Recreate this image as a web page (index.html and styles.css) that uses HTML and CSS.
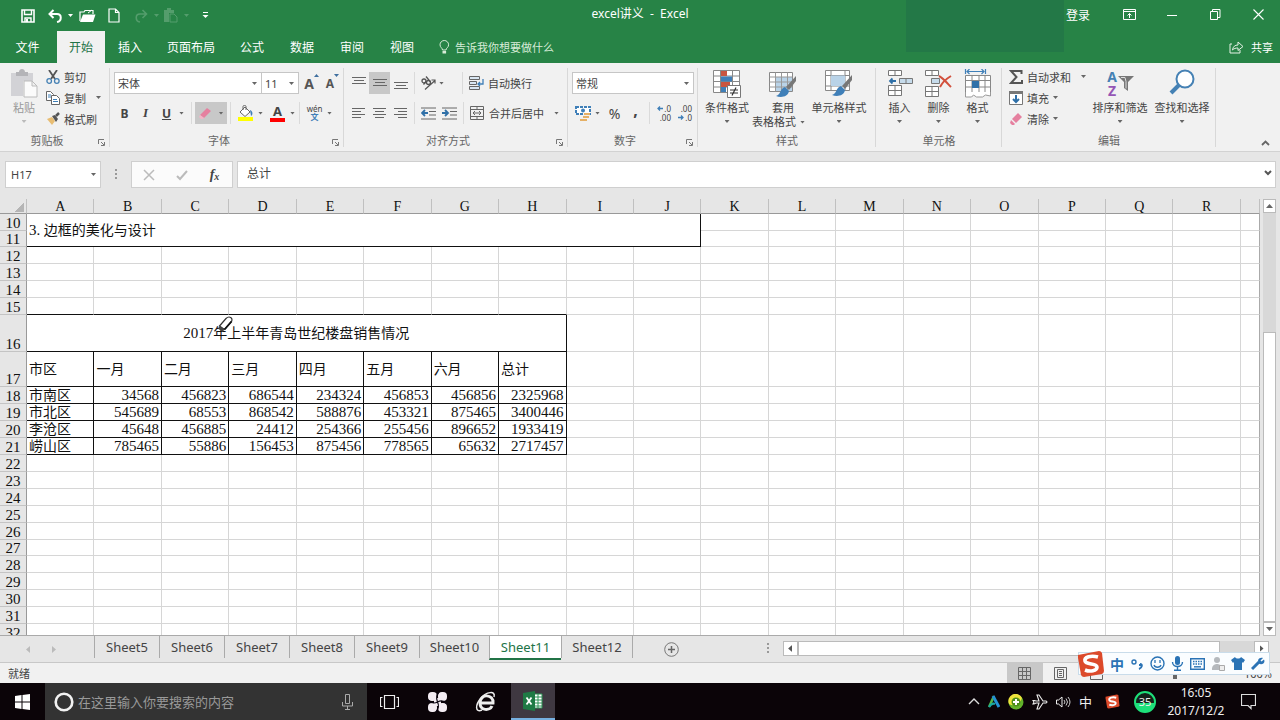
FILE: index.html
```html
<!DOCTYPE html>
<html lang="zh-CN">
<head>
<meta charset="utf-8">
<title>excel讲义 - Excel</title>
<link rel="stylesheet" href="styles.css">
</head>
<body>
<div class="app">
  <header class="head">
    <div class="titlebar">
      <div class="quick">
        <button class="ib" aria-label="保存"><svg width="14" height="14" viewBox="0 0 14 14"><path d="M1 1h12v12H1z" fill="none" stroke="#fff" stroke-width="1.6"/><path d="M3.500 1v4.500h7V1M4 13V9h6v4" fill="none" stroke="#fff" stroke-width="1.400"/><path d="M5 10h2v3H5z" fill="#fff"/></svg></button>
        <button class="ib" aria-label="撤消"><svg width="14" height="14" viewBox="0 0 14 14"><path d="M2 5h7c5 0 5 7 0 8M5.500 1L1.500 5l4 4" fill="none" stroke="#fff" stroke-width="2"/></svg></button>
        <i class="arr light"></i>
        <button class="ib open" aria-label="打开"><svg width="17" height="14" viewBox="0 0 17 14"><path d="M1 12V3h4l1-1.500h8V5" fill="none" stroke="#fff" stroke-width="1.200"/><path d="M4 5.500h12.500L14 13H1z" fill="#fff"/><path d="M9 4l4-3" stroke="#fff"/></svg></button>
        <button class="ib new" aria-label="新建"><svg width="12" height="15" viewBox="0 0 12 15"><path d="M1 1h6.500L11 4.500V14H1zM7.500 1v3.500H11" fill="none" stroke="#fff" stroke-width="1.200"/></svg></button>
        <button class="ib redo" aria-label="恢复"><svg width="14" height="14" viewBox="0 0 14 14"><path d="M12 5H6c-5 0-5 7 0 8M8.500 1l4 4-4 4" fill="none" stroke="#549d6c" stroke-width="1.600"/></svg></button>
        <i class="arr dimg"></i>
        <button class="ib pst" aria-label="粘贴"><svg width="15" height="15" viewBox="0 0 15 15"><path d="M1 2h10v3H6v9H1z" fill="#549d6c"/><path d="M7 6h4l3 3v5H7z" fill="none" stroke="#549d6c"/><path d="M4 0h4v2H4z" fill="#549d6c"/></svg></button>
        <i class="arr dimg"></i>
        <button class="ib more" aria-label="自定义快速访问工具栏"><svg width="7" height="7" viewBox="0 0 7 7"><path d="M1 .5h5" stroke="#fff"/><path d="M.5 3h6l-3 3z" fill="#fff"/></svg></button>
      </div>
      <div class="title">excel讲义&nbsp; -&nbsp; Excel</div>
      <div class="winctl">
        <button class="login">登录</button>
        <button aria-label="功能区显示选项"><svg width="13" height="11" viewBox="0 0 13 11"><path d="M.5.5h12v10H.5zM.5 2.500h12M6.500 9V4.500M4.500 6.500l2-2 2 2" fill="none" stroke="#fff"/></svg></button>
        <button aria-label="最小化"><svg width="11" height="11" viewBox="0 0 11 11"><path d="M0 6.500h10" stroke="#fff"/></svg></button>
        <button aria-label="还原"><svg width="11" height="11" viewBox="0 0 11 11"><path d="M.5 2.500h7v8h-7zM2.500 2.500v-2h7.500v8H7.500" fill="none" stroke="#fff"/></svg></button>
        <button aria-label="关闭"><svg width="11" height="11" viewBox="0 0 11 11"><path d="M.5.5l10 10M10.500.5l-10 10" stroke="#fff" stroke-width="1.100"/></svg></button>
      </div>
      <div class="patch"></div>
    </div>
    <nav class="tabs">
      <button class="file">文件</button><button class="on">开始</button><button>插入</button><button class="wide">页面布局</button><button>公式</button><button>数据</button><button>审阅</button><button>视图</button>
      <button class="tell"><svg width="11" height="15" viewBox="0 0 11 15"><path d="M3.500 10C3.500 8 1 7.500 1 4.800a4.300 4.300 0 018.600 0C9.600 7.500 7 8 7 10z" fill="none" stroke="#d8ecd8"/><path d="M3.500 11h3.600v2.500H3.500z" fill="#d8ecd8"/></svg>告诉我你想要做什么</button>
      <button class="share"><svg width="15" height="13" viewBox="0 0 15 13"><path d="M3 3H1v9h10V9" fill="none" stroke="#e6f2e6"/><path d="M3.500 9C4 5.500 6 4 9 4V1l5 4.500L9 9.500V7C6.500 7 5 7.500 3.500 9z" fill="none" stroke="#e6f2e6"/></svg>共享</button>
    </nav>
  </header>

  <section class="ribbon">
    <div class="group clip">
      <div class="body">
        <button class="big off"><svg width="28" height="30" viewBox="0 0 28 30"><path d="M1 4h22v8H13v15H1z" fill="#d2d2d6"/><path d="M6 3h3c0-4 6-4 6 0h3v4H6z" fill="#b4b4b8"/><path d="M14 12h8l5 5v11H14zM22 12v5h5" fill="#fbfbfb" stroke="#bbb"/></svg><span>粘贴</span><i class="arr"></i></button>
        <div class="stack">
          <button class="sm"><svg width="14" height="14" viewBox="0 0 14 14"><path d="M3 0l6 9M11 0L5 9" stroke="#555" stroke-width="1.800"/><circle cx="3.200" cy="11" r="2.300" fill="none" stroke="#4581b4" stroke-width="1.300"/><circle cx="10.800" cy="11" r="2.300" fill="none" stroke="#4581b4" stroke-width="1.300"/></svg>剪切</button>
          <button class="sm"><svg width="14" height="14" viewBox="0 0 14 14"><path d="M.5.5h4l3 3v6h-7z" fill="#fff" stroke="#666"/><path d="M5.500 4.500h5l3 3v6h-8z" fill="#fff" stroke="#666"/><path d="M2 4h3M2 6h3M7 8.500h4M7 10.500h5" stroke="#3f7fb8"/></svg>复制<i class="arr far"></i></button>
          <button class="sm"><svg width="14" height="14" viewBox="0 0 14 14"><path d="M1 7l5-2 3 4-3 4z" fill="#e8bd73"/><path d="M6 4l4 6 2-3-3-4z" fill="#555"/><path d="M10 4l3-3" stroke="#555" stroke-width="2.500"/></svg>格式刷</button>
        </div>
      </div>
      <div class="gl">剪贴板<svg class="dlg" width="7" height="7" viewBox="0 0 7 7"><path d="M.5 5V.5H6M3 3l3 3M6.500 3v3.500H3" fill="none" stroke="#777"/></svg></div>
    </div>

    <div class="group font">
      <div class="body rows">
        <div class="row">
          <label class="combo fname"><select aria-label="字体"><option>宋体</option></select></label><label class="combo fsize"><select aria-label="字号"><option>11</option></select></label>
          <button class="c21 g1 ga" aria-label="增大字号">A<svg width="5" height="12" viewBox="0 0 5 12"><path d="M0 3l2.500-3L5 3z" fill="#3f6f9f"/></svg></button>
          <button class="c21 gb" aria-label="减小字号">A<svg width="5" height="12" viewBox="0 0 5 12"><path d="M0 0h5L2.500 3z" fill="#3f6f9f"/></svg></button>
        </div>
        <div class="row">
          <button class="c21 b">B</button><button class="c21 it">I</button><button class="c21 u">U</button><i class="arr"></i>
          <i class="sep m7"></i>
          <button class="er"><svg width="13" height="13" viewBox="0 0 13 13"><path d="M1 8l7-7 4 3-7 7z" fill="#e5809f"/><path d="M1 8l4 3-1 1H2L0 10z" fill="#f4b4c6"/></svg><i class="arr"></i></button>
          <i class="sep"></i>
          <button class="c21 cf" aria-label="填充颜色"><svg width="16" height="16" viewBox="0 0 16 16"><path d="M2 7l5-5 5 5-5 4.500z" fill="#fff" stroke="#666"/><path d="M5 5V1.500c0-1.500 3-1.500 3 0V5" fill="none" stroke="#666"/><path d="M12 5c3 1 3 5 1 6z" fill="#3f7fb8"/><path d="M0 12h15v4H0z" fill="#ff0"/></svg></button><i class="arr"></i>
          <button class="c21 fc" aria-label="字体颜色"><span>A</span></button><i class="arr"></i>
          <i class="sep m4"></i>
          <button class="c21 wen"><span>wén</span><b>文</b></button><i class="arr"></i>
        </div>
      </div>
      <div class="gl">字体<svg class="dlg" width="7" height="7" viewBox="0 0 7 7"><path d="M.5 5V.5H6M3 3l3 3M6.500 3v3.500H3" fill="none" stroke="#777"/></svg></div>
    </div>

    <div class="group align">
      <div class="body rows">
        <div class="row">
          <button class="c21" aria-label="顶端对齐"><svg width="14" height="14" viewBox="0 0 14 14"><path d="M0 1.500h14M2 4.500h10M0 7.500h14" stroke="#666"/></svg></button>
          <button class="c21 sel" aria-label="垂直居中"><svg width="14" height="14" viewBox="0 0 14 14"><path d="M0 3.500h14M2 6.500h10M0 9.500h14" stroke="#666"/></svg></button>
          <button class="c21" aria-label="底端对齐"><svg width="14" height="14" viewBox="0 0 14 14"><path d="M0 6.500h14M2 9.500h10M0 12.500h14" stroke="#666"/></svg></button>
          <i class="sep m3"></i>
          <button class="c21" aria-label="方向"><svg width="16" height="14" viewBox="0 0 16 14"><circle cx="3" cy="5" r="2" fill="none" stroke="#555" stroke-width="1.300"/><path d="M2.500 8.500l3-3.500M5 .5l4.500 5.500" stroke="#555" stroke-width="1.300"/><circle cx="7.500" cy="6.500" r="2" fill="none" stroke="#555" stroke-width="1.300"/><path d="M4 13.500l10-9M10.500 4H14v3.500" fill="none" stroke="#555" stroke-width="1.200"/></svg></button><i class="arr"></i>
          <i class="sep m19"></i>
          <button class="sm"><svg width="15" height="14" viewBox="0 0 15 14"><path d="M.5.5h10v3H.5zM.5 5.500h7v3h-7zM.5 10.500h10v3H.5z" fill="#d9e6f2" stroke="#666"/><path d="M14 3v5H9M11 6L9 8l2 2" fill="none" stroke="#3f7fb8" stroke-width="1.300"/></svg>自动换行</button>
        </div>
        <div class="row">
          <button class="c21" aria-label="左对齐"><svg width="14" height="12" viewBox="0 0 14 12"><path d="M0 1.500h13M0 4.500h9M0 7.500h13M0 10.500h9" stroke="#666"/></svg></button>
          <button class="c21" aria-label="居中"><svg width="14" height="12" viewBox="0 0 14 12"><path d="M0 1.500h13M2 4.500h9M0 7.500h13M2 10.500h9" stroke="#666"/></svg></button>
          <button class="c21" aria-label="右对齐"><svg width="14" height="12" viewBox="0 0 14 12"><path d="M0 1.500h13M4 4.500h9M0 7.500h13M4 10.500h9" stroke="#666"/></svg></button>
          <i class="sep m3"></i>
          <button class="c21" aria-label="减少缩进"><svg width="15" height="13" viewBox="0 0 15 13"><path d="M0 1h15M8 4.500h7M8 8h7M0 12h15" stroke="#666"/><path d="M7 6H1M4 3L1 6l3 3" fill="none" stroke="#2f70a8" stroke-width="1.800"/></svg></button>
          <button class="c21" aria-label="增加缩进"><svg width="15" height="13" viewBox="0 0 15 13"><path d="M0 1h15M8 4.500h7M8 8h7M0 12h15" stroke="#666"/><path d="M0 6h6M3 3l3 3-3 3" fill="none" stroke="#2f70a8" stroke-width="1.800"/></svg></button>
          <i class="sep m6"></i>
          <button class="sm"><svg width="15" height="14" viewBox="0 0 15 14"><path d="M.5.5h13v13H.5zM.5 3.500h13M.5 10.500h13M7 .5v3M7 10.500v3M3 7h8M5 5L3 7l2 2M9 5l2 2-2 2" fill="none" stroke="#666"/></svg>合并后居中<i class="arr far"></i></button>
        </div>
      </div>
      <div class="gl">对齐方式<svg class="dlg" width="7" height="7" viewBox="0 0 7 7"><path d="M.5 5V.5H6M3 3l3 3M6.500 3v3.500H3" fill="none" stroke="#777"/></svg></div>
    </div>

    <div class="group num">
      <div class="body rows">
        <div class="row"><label class="combo fmt"><select aria-label="数字格式"><option>常规</option></select></label></div>
        <div class="row">
          <button class="c21" aria-label="会计数字格式"><svg width="16" height="15" viewBox="0 0 16 15"><path d="M1 1h14v7H1z" fill="#fff" stroke="#3f7fb8" stroke-width="2" stroke-dasharray="3 1"/><circle cx="8" cy="4.500" r="2" fill="#3f7fb8"/><path d="M9 7h6v2H9zM8 10h6v2H8zM5 13h7v2H5z" fill="#e5b066"/></svg></button><i class="arr"></i>
          <button class="c21 pc">%</button><button class="c21 cm">,</button>
          <i class="sep"></i>
          <button class="c21 dd" aria-label="增加小数位数"><span><svg width="6" height="5" viewBox="0 0 6 5"><path d="M6 2.500H1M3 .5l-2 2 2 2" fill="none" stroke="#3f7fb8" stroke-width="1.300"/></svg>.0</span><span>.00</span></button>
          <button class="c21 dd" aria-label="减少小数位数"><span>.00</span><span><svg width="6" height="5" viewBox="0 0 6 5"><path d="M0 2.500h5M3 .5l2 2-2 2" fill="none" stroke="#3f7fb8" stroke-width="1.300"/></svg>.0</span></button>
        </div>
      </div>
      <div class="gl">数字<svg class="dlg" width="7" height="7" viewBox="0 0 7 7"><path d="M.5 5V.5H6M3 3l3 3M6.500 3v3.500H3" fill="none" stroke="#777"/></svg></div>
    </div>

    <div class="group style">
      <div class="body">
        <button class="big"><svg width="28" height="30" viewBox="0 0 28 30"><path d="M.5 1.500h26v22H.5zM.5 7h26M.5 12.500h26M.5 18h26M7.500 1.500v22M19.500 1.500v22" fill="#fff" stroke="#888"/><path d="M8 2h6v5H8zM8 13h9v5H8z" fill="#c95540"/><path d="M8 7.500h11v5H8zM8 18h5v5H8z" fill="#3f7fb8"/><path d="M14.500 16.500h13v12h-13z" fill="#fff" stroke="#777"/><path d="M17 21h8M17 24h8M23 18.500l-4 8" stroke="#333" stroke-width="1.200"/></svg><span>条件格式</span><i class="arr"></i></button>
        <button class="big"><svg width="28" height="30" viewBox="0 0 28 30"><path d="M.5 3.500h23v19H.5z" fill="#fff" stroke="#888"/><path d="M6 8h17v14H6z" fill="#b9d3e8"/><path d="M.5 8h23M.5 13h23M.5 18h23M6.500 3.500v19M12.500 3.500v19M18.500 3.500v19" stroke="#999"/><path d="M27 7v5l-7 9-3-3z" fill="#777"/><path d="M16 18l4 4c-1 6-8 7-13 5 5-1 4-8 9-9z" fill="#3f7fb8"/></svg><span>套用</span><span class="ln">表格格式<i class="arr"></i></span></button>
        <button class="big"><svg width="28" height="30" viewBox="0 0 28 30"><path d="M.5 1.500h24v20H.5zM.5 6.500h24M.5 17h24M6 1.500v20M20 1.500v20" fill="#fff" stroke="#888"/><path d="M6 6.500h14V17H6z" fill="#b9d3e8"/><path d="M27 6v5l-7 9-3-3z" fill="#777"/><path d="M16 17l4 4c-1 6-8 7-13 5 5-1 4-8 9-9z" fill="#3f7fb8"/></svg><span>单元格样式</span><i class="arr"></i></button>
      </div>
      <div class="gl">样式</div>
    </div>

    <div class="group cells">
      <div class="body">
        <button class="big"><svg width="26" height="30" viewBox="0 0 26 30"><path d="M1.500 1.500h13v5h-13zM8 1.500v5M1.500 16.500h13v10h-13zM8 16.500v10M1.500 21.500h13" fill="#fff" stroke="#777"/><path d="M12.500 9.500h13v5h-13zM19 9.500v5" fill="#c6dbeb" stroke="#777"/><path d="M9 12H3M5.500 9.500L3 12l2.500 2.500" fill="none" stroke="#2f70a8" stroke-width="1.800"/></svg><span>插入</span><i class="arr"></i></button>
        <button class="big"><svg width="28" height="30" viewBox="0 0 28 30"><path d="M.5 1.500h13v5H.5zM7 1.500v5M.5 17.500h13v10H.5zM7 17.500v10M.5 22.500h13" fill="#fff" stroke="#777"/><path d="M6.500 9.500h8v5h-8z" fill="#c6dbeb" stroke="#777"/><path d="M14 7c4 2 9 8 12 11M26 7c-5 3-9 7-11 11" fill="none" stroke="#d2503c" stroke-width="2"/></svg><span>删除</span><i class="arr"></i></button>
        <button class="big"><svg width="28" height="30" viewBox="0 0 28 30"><path d="M1.500 6.500h25v17h-25zM1.500 11.500h25M1.500 18h25M8 6.500v21M15 6.500v17M21 6.500v17" fill="#fff" stroke="#888"/><path d="M1.500 23v5h6l2-2 3 2h6l3-2 5 1v-4" fill="#fff" stroke="#999"/><path d="M8 12h7v7H8z" fill="#2f70a8"/><path d="M1.500 0v5M21.500 0v5M3 2.500h17M5.500 0L3 2.500 5.500 5M17.500 0L20 2.500 17.500 5" fill="none" stroke="#3f7fb8" stroke-width="1.200"/></svg><span>格式</span><i class="arr"></i></button>
      </div>
      <div class="gl">单元格</div>
    </div>

    <div class="group edit">
      <div class="body">
        <div class="stack">
          <button class="sm"><svg width="14" height="14" viewBox="0 0 14 14"><path d="M12.500 4V1H2l5.500 6L2 13h11v-3" fill="none" stroke="#555" stroke-width="2"/></svg>自动求和<i class="arr far"></i></button>
          <button class="sm"><svg width="14" height="14" viewBox="0 0 14 14"><path d="M.5.5h13v13H.5z" fill="#fff" stroke="#777"/><path d="M0 0h14v3H0z" fill="#777"/><path d="M7 4v7M4 8l3 3 3-3" fill="none" stroke="#2f70a8" stroke-width="2"/></svg>填充<i class="arr"></i></button>
          <button class="sm"><svg width="14" height="14" viewBox="0 0 14 14"><path d="M3 7l6-6 4 4-6 6z" fill="#e5809f"/><path d="M2 8l4 4-1 1H3L1 11z" fill="#e5809f"/></svg>清除<i class="arr"></i></button>
        </div>
        <button class="big"><span class="az"><span class="letters"><b class="za">A</b><b class="zz">Z</b></span><svg width="16" height="16" viewBox="0 0 16 16"><path d="M0 0h16l-6 6v9l-4-3V6z" fill="#777"/><path d="M3 1.500h4l1 4v7" fill="none" stroke="#ddd"/></svg></span><span>排序和筛选</span><i class="arr"></i></button>
        <button class="big"><svg width="28" height="30" viewBox="0 0 28 30"><circle cx="17" cy="10" r="8.500" fill="#fff" stroke="#4581b4" stroke-width="2"/><path d="M11 16l-8 8" stroke="#4581b4" stroke-width="4"/></svg><span>查找和选择</span><i class="arr"></i></button>
      </div>
      <div class="gl">编辑</div>
    </div>
    <button class="fold" aria-label="折叠功能区"><svg width="9" height="6" viewBox="0 0 9 6"><path d="M1 5l3.500-3.500L8 5" fill="none" stroke="#666" stroke-width="1.800"/></svg></button>
  </section>

  <section class="fbar">
    <label class="combo nbox"><select aria-label="名称框"><option>H17</option></select></label>
    <i class="dots"></i>
    <div class="fx">
      <button aria-label="取消"><svg width="12" height="12" viewBox="0 0 12 12"><path d="M1 1l10 10M11 1L1 11" stroke="#bbb" stroke-width="1.500"/></svg></button>
      <button aria-label="输入"><svg width="12" height="12" viewBox="0 0 12 12"><path d="M1 7l3 3 7-8" fill="none" stroke="#bbb" stroke-width="2"/></svg></button>
      <button class="fn">f<small>x</small></button>
    </div>
    <div class="fin"><input aria-label="编辑栏" value="总计"><svg width="8" height="6" viewBox="0 0 8 6"><path d="M1 1l3 3 3-3" fill="none" stroke="#555" stroke-width="2"/></svg></div>
  </section>

  <main class="work">
    <div class="sheet">
      <table class="grid" id="grid"></table>
      <svg class="pen" width="18" height="20" viewBox="0 0 18 20"><path d="M3.500 10L10 2.500c2-2 4-1.500 5-.8 1.300 1 1.300 2.800 0 4.300L8.500 13.500z" fill="#fff" stroke="#333" stroke-width="1.200"/><path d="M15.500 5.500L8.500 13.500" stroke="#111" stroke-width="1.800"/><path d="M3.500 10l5 3.500-2 2.500-4.500-3.500z" fill="#444"/></svg>
    </div>
    <div class="vbar"><button class="up" aria-label="向上"></button><div class="vtrack"><div class="vthumb"></div></div><button class="down" aria-label="向下"></button></div>
  </main>

  <nav class="sheets">
    <div class="nav"><i class="lt dim"></i><i class="rt dim"></i></div>
    <button>Sheet5</button><button>Sheet6</button><button>Sheet7</button><button>Sheet8</button><button>Sheet9</button><button class="w70">Sheet10</button><button class="w on">Sheet11</button><button class="w last">Sheet12</button>
    <button class="add" aria-label="新工作表"><svg width="15" height="15" viewBox="0 0 15 15"><circle cx="7.500" cy="7.500" r="6.800" fill="none" stroke="#777"/><path d="M7.500 4v7M4 7.500h7" stroke="#666" stroke-width="1.500"/></svg></button>
    <i class="dots"></i>
    <div class="hbar"><button aria-label="向左"><i class="lt"></i></button><div class="hthumb"></div><div class="htrack"></div><button aria-label="向右"><i class="rt"></i></button></div>
  </nav>

  <footer class="status">
    <span>就绪</span>
    <div class="views">
      <button class="on" aria-label="普通"><svg width="13" height="13" viewBox="0 0 13 13"><path d="M.5.5h12v12H.5zM.5 4.500h12M.5 8.500h12M4.500.5v12M8.500.5v12" fill="none" stroke="#666"/></svg></button>
      <button aria-label="页面布局"><svg width="13" height="13" viewBox="0 0 13 13"><path d="M.5.5h12v12H.5zM3.500 2.500h6v8h-6zM5 4.500h3M5 6.500h3M5 8.500h3" fill="none" stroke="#666"/></svg></button>
      <button aria-label="分页预览"><svg width="13" height="13" viewBox="0 0 13 13"><path d="M.5.5h12v12H.5z" fill="none" stroke="#666"/></svg></button>
      <i class="knob"></i><span class="zoom">100%</span>
    </div>
    <div class="ime">
      <svg class="logo" width="28" height="28" viewBox="0 0 28 28"><path d="M1 5l21-4q2 0 3 2l2 18q0 2-2 3L7 27q-2 0-3-2L1 8z" fill="#dc4a2b"/><path d="M21 7C14 5 7 7 8 11s12 2 12 6-7 5-12 3" fill="none" stroke="#fff" stroke-width="3.600"/></svg>
      <b>中</b>
      <svg width="14" height="14" viewBox="0 0 14 14"><circle cx="4" cy="5" r="2" fill="none" stroke="#2a73b5" stroke-width="1.400"/><path d="M10 7c3 0 2 4-1 5M9 8h3" fill="none" stroke="#2a73b5" stroke-width="2"/></svg>
      <svg width="15" height="15" viewBox="0 0 15 15"><circle cx="7.500" cy="7.500" r="6.500" fill="none" stroke="#2a73b5" stroke-width="1.400"/><path d="M5 4v3M10 4v3M4 9c1 3 6 3 7 0" fill="none" stroke="#2a73b5" stroke-width="1.300"/></svg>
      <svg width="13" height="15" viewBox="0 0 13 15"><rect x="4" y="0" width="5" height="9" rx="2.500" fill="#2a73b5"/><path d="M1.500 6c0 6 10 6 10 0M6.500 10v4M3 14.300h7" fill="none" stroke="#2a73b5" stroke-width="1.400"/></svg>
      <svg width="15" height="12" viewBox="0 0 15 12"><path d="M.7.700h13.600v10.600H.7z" fill="none" stroke="#2a73b5" stroke-width="1.400"/><path d="M3 3.500h9M3 6h9" stroke="#2a73b5" stroke-width="1.400" stroke-dasharray="1.500 1"/><path d="M4 8.800h7" stroke="#2a73b5" stroke-width="1.400"/></svg>
      <svg width="14" height="14" viewBox="0 0 14 14"><circle cx="6" cy="3" r="3" fill="#b5b9bd"/><path d="M1 13c-1-8 11-8 10 0z" fill="#b5b9bd"/><path d="M8.500 8.500h5v5h-5z" fill="#eee" stroke="#aaa"/></svg>
      <svg width="14" height="13" viewBox="0 0 14 13"><path d="M4 0c1 2 5 2 6 0l4 3-2 3-1-1v8H3V5L2 6 0 3z" fill="#2a73b5"/></svg>
      <svg width="14" height="14" viewBox="0 0 14 14"><path d="M1 12l7-7" stroke="#2a73b5" stroke-width="3"/><path d="M12 1L9.500 3.500l1 1L13 2.500c2 4-3 6-5 4S7 0 12 1z" fill="#2a73b5"/></svg>
    </div>
  </footer>

  <div class="taskbar">
    <button class="start" aria-label="开始"><svg width="15" height="16" viewBox="0 0 15 16"><path d="M0 2l6.500-1v6.500H0zM7.500 1L15 0v7.500H7.500zM0 8.500h6.500V15L0 14zM7.500 8.500H15V16l-7.500-1z" fill="#fff"/></svg></button>
    <label class="search"><svg width="20" height="20" viewBox="0 0 20 20"><circle cx="10" cy="10" r="8.300" fill="none" stroke="#f2f2f2" stroke-width="2.600"/></svg><input placeholder="在这里输入你要搜索的内容" aria-label="搜索"><svg width="11" height="16" viewBox="0 0 11 16"><path d="M3.500 .5h4v9h-4zM.5 8v4h10V8M5.500 12v3M3 15.500h5" fill="none" stroke="#aaa"/></svg></label>
    <button class="tb" aria-label="任务视图"><svg width="19" height="14" viewBox="0 0 19 14"><path d="M4.500.5h10v13h-10zM2.500 2.500h-2v9h2M16.500 2.500h2v9h-2" fill="none" stroke="#eee" stroke-width="1.200"/></svg></button>
    <button class="tb" aria-label="浏览器"><svg width="21" height="22" viewBox="0 0 21 22"><rect x="1" y="1" width="9" height="9" rx="4" fill="#f4edf3"/><rect x="11" y="1" width="9" height="9" rx="4" fill="#f4edf3"/><rect x="1" y="12" width="9" height="9" rx="4" fill="#f4edf3"/><rect x="11" y="12" width="9" height="9" rx="4" fill="#f4edf3"/><path d="M7 7h7v8H7z" fill="#f4edf3"/><path d="M10.500 11C9 7 9 4 12 1M10.500 11c4-2 7-1 9.500 2M10.500 11c2 4 1 7-1.500 10M10.500 11C7 13 4 12 1 9" fill="none" stroke="#0b0510" stroke-width="1.200"/></svg></button>
    <button class="tb" aria-label="Internet Explorer"><svg width="21" height="22" viewBox="0 0 21 22"><path d="M4 12h14c1-9-13-10-13 0 0 8 10 8 12 3" fill="none" stroke="#eee" stroke-width="3"/><path d="M19 6c2-7-8-5-13 1-6 7-6 15 1 12" fill="none" stroke="#eee" stroke-width="1.500"/></svg></button>
    <button class="tb xl" aria-label="Excel"><svg width="20" height="20" viewBox="0 0 20 20"><path d="M11 3h8v14h-8z" fill="#fff" stroke="#2f9257"/><path d="M11 6h8M11 9h8M11 12h8M11 15h8M15 3v14" stroke="#2f9257"/><path d="M0 2l12-2v20L0 18z" fill="#1f7a45"/><path d="M3.500 6.500l5 7M8.500 6.500l-5 7" stroke="#fff" stroke-width="1.800"/></svg></button>
    <div class="tray">
      <svg width="12" height="7" viewBox="0 0 12 7"><path d="M1 6l5-5 5 5" fill="none" stroke="#ddd" stroke-width="1.400"/></svg>
      <svg width="12" height="13" viewBox="0 0 12 13"><path d="M1 12L6 1" stroke="#54b848" stroke-width="2.500"/><path d="M5 1l6 11" stroke="#2491d2" stroke-width="3"/><path d="M1 12c2-3 4-4 6-3" fill="none" stroke="#19a7a0" stroke-width="2"/></svg>
      <svg width="16" height="16" viewBox="0 0 16 16"><circle cx="8" cy="8" r="7.500" fill="#62b32b"/><path d="M1 10A7 7 0 0114 4c-2 6-7 9-13 6z" fill="#eee43c"/><circle cx="8" cy="8" r="4.500" fill="#4d8f1b"/><path d="M8 5v6M5 8h6" stroke="#fff" stroke-width="2"/></svg>
      <svg width="16" height="16" viewBox="0 0 16 16"><path d="M1 6.500h1.500L4 7h3L5 1h2l4 6h3q2 1 0 2h-3l-4 6H5l2-6H4l-2 1H1l1-2z" fill="none" stroke="#eee" stroke-width="1.100"/></svg>
      <svg width="15" height="12" viewBox="0 0 15 12"><path d="M.5 4h2L6 1v10L2.500 8h-2z" fill="none" stroke="#eee"/><path d="M8 4q2 2 0 4M10 2.500q3 3.500 0 7M12 1q4 5 0 10" fill="none" stroke="#ccc"/></svg>
      <span>中</span>
      <svg class="sg" width="15" height="15" viewBox="0 0 28 28"><path d="M1 5l21-4q2 0 3 2l2 18q0 2-2 3L7 27q-2 0-3-2L1 8z" fill="#dc4a2b"/><path d="M21 7C14 5 7 7 8 11s12 2 12 6-7 5-12 3" fill="none" stroke="#fff" stroke-width="3.600"/></svg>
      <span class="ball">35</span>
      <div class="clock"><span>16:05</span><span>2017/12/2</span></div>
      <svg width="15" height="16" viewBox="0 0 15 16"><path d="M.5.5h14v11H10v3l-3-3H.5z" fill="none" stroke="#ddd" stroke-width="1.200"/></svg>
    </div>
  </div>
</div>
<script src="grid.js"></script>
</body>
</html>
```

FILE: grid.js
```js
const letters = "ABCDEFGHIJKLMNOPQR".split("");
const data = {
  17: ["市区", "一月", "二月", "三月", "四月", "五月", "六月", "总计"],
  18: ["市南区", 34568, 456823, 686544, 234324, 456853, 456856, 2325968],
  19: ["市北区", 545689, 68553, 868542, 588876, 453321, 875465, 3400446],
  20: ["李沧区", 45648, 456885, 24412, 254366, 255456, 896652, 1933419],
  21: ["崂山区", 785465, 55886, 156453, 875456, 778565, 65632, 2717457]
};
const rowClass = { 11: "short", 16: "title-row", 17: "head-row", 27: "short" };

let html = '<colgroup><col class="rh">' + "<col>".repeat(18) + '<col class="tail"></colgroup>';
html += '<thead><tr><th class="corner"></th>' + letters.map(l => `<th>${l}</th>`).join("") + "<th></th></tr></thead><tbody>";
for (let r = 10; r <= 32; r++) {
  html += `<tr class="${rowClass[r] || ""}"><th>${r}</th>`;
  let start = 0;
  if (r === 10) {
    html += '<td class="ink" colspan="10" rowspan="2"><span class="n">3.</span> 边框的美化与设计</td>';
    start = 10;
  } else if (r === 11) {
    start = 10;
  } else if (r === 16) {
    html += '<td class="ink mid" colspan="8"><span class="n">2017</span>年上半年青岛世纪楼盘销售情况</td>';
    start = 8;
  }
  for (let c = start; c < 19; c++) {
    const v = data[r] && data[r][c];
    let cls = "";
    if (v !== undefined) cls = typeof v === "number" ? "ink num-cell" : "ink";
    else if (r === 15 && c < 8) cls = "under";
    html += `<td class="${cls}">${v === undefined ? "" : v}</td>`;
  }
  html += "</tr>";
}
document.getElementById("grid").innerHTML = html + "</tbody>";
```

FILE: styles.css
```css
* { box-sizing: border-box; }
body { margin: 0; overflow: hidden; font-family: "Noto Sans", "Noto Sans CJK SC", sans-serif; font-size: 11px; color: #444; }
button, select, input { font: inherit; color: inherit; border: 0; background: none; padding: 0; margin: 0; border-radius: 0; outline: 0; }
button { display: flex; align-items: center; justify-content: center; white-space: nowrap; flex: none; }
svg { display: block; flex: none; }
.app { display: flex; flex-direction: column; height: 100vh; background: #e6e6e6; }

/* title bar and ribbon tabs */
.head { background: #278346; color: #fff; font-size: 12px; }
.titlebar { position: relative; display: flex; align-items: center; justify-content: space-between; height: 31px; }
.quick { display: flex; align-items: center; padding-left: 20px; gap: 6px; }
.quick .ib { width: 15px; height: 20px; }
.quick .ib:nth-child(2) { margin-left: 6px; }
.quick .open { width: 17px; }
.quick .new { margin-left: 4px; }
.quick .redo { margin-left: 6px; }
.quick .pst { margin-left: -2px; }
.quick .more { margin-left: 3px; }
.title { position: absolute; left: 50%; top: 5px; transform: translateX(-50%); white-space: nowrap; line-height: 18px; }
.winctl { display: flex; align-self: flex-start; }
.winctl button { width: 43px; height: 29px; }
.winctl .login { width: 60px; }
.patch { position: absolute; right: 216px; top: 0; width: 158px; height: 52px; background: #237847; }
.tabs { display: flex; height: 32px; align-items: stretch; }
.tabs button { width: 50px; }
.tabs .file { width: 57px; padding-right: 2px; }
.tabs .on { width: 48px; background: #f1f1f1; color: #217346; }
.tabs .wide { width: 72px; }
.tabs .tell { width: auto; gap: 5px; padding-left: 12px; color: #d8ecd8; font-size: 11px; }
.tabs .share { width: auto; margin-left: auto; gap: 7px; padding-right: 7px; font-size: 11px; }

.arr { width: 5px; height: 3px; flex: none; background: #666; clip-path: polygon(0 0, 100% 0, 50% 100%); }
.arr.light { background: #fff; }
.arr.dimg { background: #549d6c; }
.arr.far { margin-left: 6px; }

/* ribbon */
.ribbon { display: flex; height: 89px; background: #f1f1f1; border-bottom: 1px solid #d2d2d2; }
.group { display: flex; flex-direction: column; flex: none; padding-top: 3px; position: relative; }
.group::after { content: ""; position: absolute; right: 0; top: 5px; bottom: 4px; width: 1px; background: #d8d8d8; }
.clip { width: 110px; }
.font { width: 234px; }
.align { width: 224px; }
.num { width: 130px; }
.style { width: 178px; }
.cells { width: 126px; }
.edit { width: 214px; }
.body { display: flex; height: 65px; }
.gl { display: flex; align-items: center; justify-content: center; height: 18px; position: relative; color: #666; padding-right: 16px; }
.style .gl, .cells .gl, .edit .gl { padding-right: 0; }
.dlg { position: absolute; right: 5px; bottom: 3px; }
.rows { flex-direction: column; padding-left: 4px; }
.row { display: flex; align-items: center; height: 34px; }
.row + .row { height: 26px; }
.c21 { width: 21px; height: 22px; }
.sep { width: 1px; height: 22px; flex: none; background: #dadada; }
.m7 { margin: 0 7px; }
.m4 { margin: 0 4px; }
.m3 { margin: 0 3px; }
.m6 { margin: 0 6px 0 3px; }
.m19 { margin: 0 6px 0 18px; }
.sel { background: #c8c8c8; }
.big { flex-direction: column; justify-content: flex-start; line-height: 14px; padding-top: 3px; height: 64px; }
.big > svg { margin-bottom: 2px; }
.big > .arr { margin-top: 5px; }
.big.off { color: #999; width: 40px; margin-left: 4px; }
.big.off .arr { background: #bbb; }
.ln { display: flex; align-items: center; gap: 4px; margin-left: -9px; }
.stack { display: flex; flex-direction: column; align-items: flex-start; }
.sm { height: 21px; gap: 4px; }
.clip .stack { padding-left: 2px; }
.combo { position: relative; display: flex; flex: none; height: 22px; background: #fff; border: 1px solid #c6c6c6; }
.combo select { appearance: none; width: 100%; padding-left: 3px; background: transparent; }
.combo::after { content: ""; position: absolute; right: 4px; top: 9px; width: 5px; height: 3px; background: #666; clip-path: polygon(0 0, 100% 0, 50% 100%); }
.fname { width: 148px; }
.fsize { width: 37px; border-left: 0; }
.fmt { width: 122px; }
.g1 { margin-left: 2px; }
.ga { font-size: 14px; font-weight: bold; color: #555; }
.gb { font-size: 12px; font-weight: bold; color: #555; }
.ga svg, .gb svg { align-self: flex-start; margin-top: 2px; }
.fc span { width: 15px; height: 18px; font-size: 13px; line-height: 14px; font-weight: bold; border-bottom: 4px solid #f00; }
.dd { flex-direction: column; font-size: 8px; line-height: 9px; align-items: flex-end; padding-right: 3px; }
.dd span { display: flex; align-items: center; gap: 1px; }
.az { display: flex; align-items: center; width: 28px; height: 30px; margin-bottom: 2px; }
.letters { display: flex; flex-direction: column; width: 12px; font-size: 14px; line-height: 14px; }
.za { color: #4581b4; }
.zz { color: #9556b5; }
.b { font-weight: bold; font-size: 12px; }
.it { font: italic bold 13px "Liberation Serif", serif; }
.u { font-weight: bold; font-size: 12px; text-decoration: underline; }
.er { width: 32px; height: 22px; gap: 7px; background: #c8c8c8; }
.sep.m7 + .er { margin-left: -4px; margin-right: 3px; }
.cf { margin-left: 4px; }
.font .arr { margin-left: 2px; }
.font .er .arr { margin-left: 0; }
.font .cf + .arr { margin-right: 4px; }
.wen { flex-direction: column; font-size: 8px; line-height: 8px; }
.wen b { color: #3f7fb8; font-size: 8px; font-weight: bold; }
.num .arr { margin-left: 2px; margin-right: 4px; }
.pc { font-size: 14px; }
.cm { font-size: 16px; font-weight: bold; padding-bottom: 7px; }
.num .sep { margin: 0 3px; }
.style .big { width: 56px; }
.style .body { padding-left: 1px; }
.cells .big { width: 39px; }
.cells .body { padding-left: 4px; }
.edit .body { padding-left: 7px; }
.edit .stack { width: 80px; }
.edit .big { width: 62px; }
.fold { margin-left: auto; align-self: flex-end; padding: 0 10px 5px 0; }

/* formula bar */
.fbar { display: flex; align-items: flex-start; height: 47px; padding: 9px 4px 0 5px; }
.nbox { width: 96px; height: 27px; border-color: #cfcfcf; }
.nbox select { padding-left: 5px; }
.nbox::after { top: 11px; }
.dots { width: 2px; height: 11px; flex: none; background: repeating-linear-gradient(#999 0 2px, transparent 2px 4px); }
.fbar .dots { margin: 8px 14px 0 14px; }
.fx { display: flex; width: 102px; height: 27px; background: #fbfbfb; border: 1px solid #cfcfcf; }
.fx button { width: 33px; }
.fn { font: italic bold 14px "Liberation Serif", serif; }
.fn small { font-size: 10px; padding-top: 3px; }
.fin { display: flex; flex: 1; height: 27px; margin-left: 4px; padding: 0 3px 4px 9px; align-items: center; background: #fff; border: 1px solid #cfcfcf; }
.fin input { flex: 1; font-size: 12px; }

/* worksheet */
.work { display: flex; flex: 1; min-height: 0; }
.sheet { position: relative; flex: 1; overflow: hidden; border-bottom: 1px solid #aaa; }
.grid { width: 100%; table-layout: fixed; border-spacing: 0; background: #fff; color: #111; font-family: "Liberation Serif", "Noto Sans CJK SC", serif; font-size: 14px; line-height: 16px; }
.rh { width: 27px; }
.tail { width: 19px; }
.grid th { background: #e6e6e6; font-weight: normal; font-size: 15px; line-height: 14px; padding: 0; border-right: 1px solid #999; border-bottom: 1px solid #c4c4c4; vertical-align: bottom; overflow: hidden; white-space: nowrap; }
.grid thead th { height: 15px; font-size: 14px; line-height: 12px; border-right-color: #c0c0c0; border-bottom-color: #999; }
.grid thead th.corner { background: linear-gradient(135deg, transparent 50%, #b5b5b5 50%) 14px 3px / 10px 10px no-repeat #e6e6e6; }
.grid tbody tr { height: 17px; }
.grid tbody .short { height: 16px; }
.grid tbody .title-row { height: 37px; }
.grid tbody .head-row { height: 35px; }
.grid td { padding: 0 2px; line-height: 15px; white-space: nowrap; overflow: hidden; border-right: 1px solid #d6d6d6; border-bottom: 1px solid #d6d6d6; }
.grid td:last-child { border-right-color: #aaa; }
.grid .ink { border-color: #111; padding-top: 1px; }
.grid .under { border-bottom-color: #111; }
.grid .num-cell { text-align: right; font-size: 15px; }
.grid .mid { text-align: center; }
.grid .n { font-size: 15px; }
.pen { position: absolute; left: 216px; top: 117px; }
.vbar { display: flex; flex-direction: column; width: 20px; padding: 0 4px 0 3px; }
.vbar button { height: 14px; background: #fff; border: 1px solid #bbb; }
.up::after, .down::after { content: ""; width: 7px; height: 4px; background: #666; clip-path: polygon(0 0, 100% 0, 50% 100%); }
.up::after { clip-path: polygon(50% 0, 100% 100%, 0 100%); }
.vtrack { flex: 1; display: flex; flex-direction: column; justify-content: flex-end; background: #d8d8d8; }
.vthumb { height: 71%; background: #fff; border: 1px solid #bbb; }

/* sheet tabs */
.sheets { display: flex; height: 27px; align-items: flex-start; border-bottom: 1px solid #c8c8c8; font-size: 13px; }
.nav { display: flex; width: 94px; padding: 10px 0 0 26px; gap: 22px; }
.lt, .rt { width: 4px; height: 7px; background: #555; }
.lt { clip-path: polygon(100% 0, 100% 100%, 0 50%); }
.rt { clip-path: polygon(0 0, 100% 50%, 0 100%); }
.dim { background: #bbb; }
.sheets > button { width: 65px; height: 22px; border-left: 1px solid #aaa; }
.sheets > .w70 { width: 70px; }
.sheets > .w { width: 72px; }
.sheets > .on { background: #fff; color: #217346; border-bottom: 2px solid #217346; height: 24px; }
.sheets > .last { border-right: 1px solid #aaa; }
.sheets > .add { width: 15px; border: 0; margin: 2px 0 0 31px; }
.sheets .dots { margin: 7px 14px 0 auto; }
.hbar { display: flex; flex: none; width: 38%; height: 15px; margin: 5px 11px 0 0; background: #d8d8d8; }
.hbar button { width: 15px; background: #fff; border: 1px solid #bbb; }
.hthumb { flex: 10; background: #fff; border: 1px solid #bbb; }
.htrack { width: 34px; }

/* status bar and input method bar */
.status { position: relative; display: flex; justify-content: space-between; align-items: center; height: 20px; padding-left: 8px; background: #f1f1f1; }
.views { display: flex; align-items: center; height: 100%; padding-right: 8px; }
.views button { width: 36px; height: 100%; }
.views .on { background: #c8c8c8; }
.knob { width: 4px; height: 12px; margin: 0 67px 0 58px; background: #666; }
.ime { position: absolute; right: 10px; top: -11px; height: 23px; display: flex; align-items: center; gap: 6px; padding: 0 4px 0 0; background: #fafdff; border: 1px solid #c9dcea; }
.ime .logo { margin-left: -2px; margin-right: -1px; }
.ime b { color: #2a73b5; font-size: 14px; }

/* taskbar */
.taskbar { display: flex; height: 37px; background: #0b0408; color: #eee; }
.start { width: 45px; }
.search { display: flex; align-items: center; gap: 4px; width: 322px; padding: 0 14px 0 9px; background: #333; }
.search input { flex: 1; min-width: 0; font-size: 13px; }
.search input::placeholder { color: #999; opacity: 1; }
.tb { width: 44px; margin-right: 4px; }
.xl { background: #3f3841; border-bottom: 2px solid #76b0e0; }
.tray { display: flex; align-items: center; margin-left: auto; gap: 8px; padding-right: 24px; font-size: 13px; }
.sg { margin: 0 6px 0 5px; }
.ball { display: flex; align-items: center; justify-content: center; width: 22px; height: 22px; border-radius: 50%; border: 2px solid #1ee07a; background: linear-gradient(#14221b 55%, #1ee07a 55%); font-size: 11px; }
.clock { display: flex; flex-direction: column; align-items: center; width: 64px; font-size: 12px; line-height: 18px; margin-right: 5px; }
```
